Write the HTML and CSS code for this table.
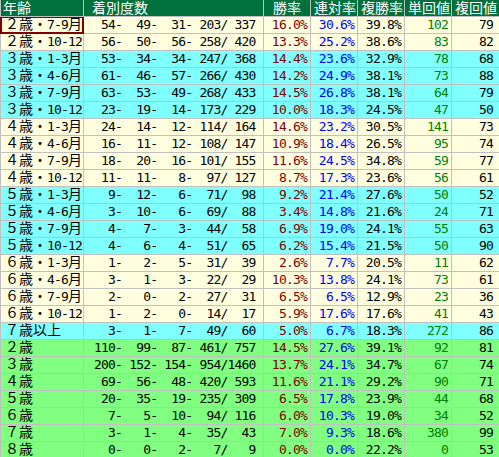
FILE: index.html
```html
<!DOCTYPE html>
<html lang="ja">
<head>
<meta charset="utf-8">
<title>年齢別成績</title>
<link rel="stylesheet" href="styles.css">
</head>
<body>
<table class="stats">
<colgroup>
<col class="c-age"><col class="c-rec"><col class="c-p"><col class="c-p"><col class="c-p"><col class="c-p"><col class="c-last">
</colgroup>
<thead>
<tr><th class="h-age">年齢</th><th class="h-rec">着別度数</th><th>勝率</th><th>連対率</th><th>複勝率</th><th>単回値</th><th>複回値</th></tr>
</thead>
<tbody>
<tr class="cream"><td class="age sel">２歳・<span class="nn">7-9</span>月</td><td class="rec n">  54-  49-  31- 203/ 337</td><td class="n win">16.0%</td><td class="n ren">30.6%</td><td class="n fuku">39.8%</td><td class="n tan">102</td><td class="n fk last">79</td></tr>
<tr class="cream"><td class="age">２歳・<span class="nn">10-12</span></td><td class="rec n">  56-  50-  56- 258/ 420</td><td class="n win">13.3%</td><td class="n ren">25.2%</td><td class="n fuku">38.6%</td><td class="n tan">83</td><td class="n fk last">82</td></tr>
<tr class="cyan"><td class="age">３歳・<span class="nn">1-3</span>月</td><td class="rec n">  53-  34-  34- 247/ 368</td><td class="n win">14.4%</td><td class="n ren">23.6%</td><td class="n fuku">32.9%</td><td class="n tan">78</td><td class="n fk last">68</td></tr>
<tr class="cyan"><td class="age">３歳・<span class="nn">4-6</span>月</td><td class="rec n">  61-  46-  57- 266/ 430</td><td class="n win">14.2%</td><td class="n ren">24.9%</td><td class="n fuku">38.1%</td><td class="n tan">73</td><td class="n fk last">88</td></tr>
<tr class="cyan"><td class="age">３歳・<span class="nn">7-9</span>月</td><td class="rec n">  63-  53-  49- 268/ 433</td><td class="n win">14.5%</td><td class="n ren">26.8%</td><td class="n fuku">38.1%</td><td class="n tan">64</td><td class="n fk last">79</td></tr>
<tr class="cyan"><td class="age">３歳・<span class="nn">10-12</span></td><td class="rec n">  23-  19-  14- 173/ 229</td><td class="n win">10.0%</td><td class="n ren">18.3%</td><td class="n fuku">24.5%</td><td class="n tan">47</td><td class="n fk last">50</td></tr>
<tr class="cream"><td class="age">４歳・<span class="nn">1-3</span>月</td><td class="rec n">  24-  14-  12- 114/ 164</td><td class="n win">14.6%</td><td class="n ren">23.2%</td><td class="n fuku">30.5%</td><td class="n tan">141</td><td class="n fk last">73</td></tr>
<tr class="cream"><td class="age">４歳・<span class="nn">4-6</span>月</td><td class="rec n">  16-  11-  12- 108/ 147</td><td class="n win">10.9%</td><td class="n ren">18.4%</td><td class="n fuku">26.5%</td><td class="n tan">95</td><td class="n fk last">74</td></tr>
<tr class="cream"><td class="age">４歳・<span class="nn">7-9</span>月</td><td class="rec n">  18-  20-  16- 101/ 155</td><td class="n win">11.6%</td><td class="n ren">24.5%</td><td class="n fuku">34.8%</td><td class="n tan">59</td><td class="n fk last">77</td></tr>
<tr class="cream"><td class="age">４歳・<span class="nn">10-12</span></td><td class="rec n">  11-  11-   8-  97/ 127</td><td class="n win">8.7%</td><td class="n ren">17.3%</td><td class="n fuku">23.6%</td><td class="n tan">56</td><td class="n fk last">61</td></tr>
<tr class="cyan"><td class="age">５歳・<span class="nn">1-3</span>月</td><td class="rec n">   9-  12-   6-  71/  98</td><td class="n win">9.2%</td><td class="n ren">21.4%</td><td class="n fuku">27.6%</td><td class="n tan">50</td><td class="n fk last">52</td></tr>
<tr class="cyan"><td class="age">５歳・<span class="nn">4-6</span>月</td><td class="rec n">   3-  10-   6-  69/  88</td><td class="n win">3.4%</td><td class="n ren">14.8%</td><td class="n fuku">21.6%</td><td class="n tan">24</td><td class="n fk last">71</td></tr>
<tr class="cyan"><td class="age">５歳・<span class="nn">7-9</span>月</td><td class="rec n">   4-   7-   3-  44/  58</td><td class="n win">6.9%</td><td class="n ren">19.0%</td><td class="n fuku">24.1%</td><td class="n tan">55</td><td class="n fk last">63</td></tr>
<tr class="cyan"><td class="age">５歳・<span class="nn">10-12</span></td><td class="rec n">   4-   6-   4-  51/  65</td><td class="n win">6.2%</td><td class="n ren">15.4%</td><td class="n fuku">21.5%</td><td class="n tan">50</td><td class="n fk last">90</td></tr>
<tr class="cream"><td class="age">６歳・<span class="nn">1-3</span>月</td><td class="rec n">   1-   2-   5-  31/  39</td><td class="n win">2.6%</td><td class="n ren">7.7%</td><td class="n fuku">20.5%</td><td class="n tan">11</td><td class="n fk last">62</td></tr>
<tr class="cream"><td class="age">６歳・<span class="nn">4-6</span>月</td><td class="rec n">   3-   1-   3-  22/  29</td><td class="n win">10.3%</td><td class="n ren">13.8%</td><td class="n fuku">24.1%</td><td class="n tan">73</td><td class="n fk last">61</td></tr>
<tr class="cream"><td class="age">６歳・<span class="nn">7-9</span>月</td><td class="rec n">   2-   0-   2-  27/  31</td><td class="n win">6.5%</td><td class="n ren">6.5%</td><td class="n fuku">12.9%</td><td class="n tan">23</td><td class="n fk last">36</td></tr>
<tr class="cream"><td class="age">６歳・<span class="nn">10-12</span></td><td class="rec n">   1-   2-   0-  14/  17</td><td class="n win">5.9%</td><td class="n ren">17.6%</td><td class="n fuku">17.6%</td><td class="n tan">41</td><td class="n fk last">43</td></tr>
<tr class="cyan"><td class="age">７歳以上</td><td class="rec n">   3-   1-   7-  49/  60</td><td class="n win">5.0%</td><td class="n ren">6.7%</td><td class="n fuku">18.3%</td><td class="n tan">272</td><td class="n fk last">86</td></tr>
<tr class="green"><td class="age">２歳</td><td class="rec n"> 110-  99-  87- 461/ 757</td><td class="n win">14.5%</td><td class="n ren">27.6%</td><td class="n fuku">39.1%</td><td class="n tan">92</td><td class="n fk last">81</td></tr>
<tr class="green"><td class="age">３歳</td><td class="rec n"> 200- 152- 154- 954/1460</td><td class="n win">13.7%</td><td class="n ren">24.1%</td><td class="n fuku">34.7%</td><td class="n tan">67</td><td class="n fk last">74</td></tr>
<tr class="green"><td class="age">４歳</td><td class="rec n">  69-  56-  48- 420/ 593</td><td class="n win">11.6%</td><td class="n ren">21.1%</td><td class="n fuku">29.2%</td><td class="n tan">90</td><td class="n fk last">71</td></tr>
<tr class="green"><td class="age">５歳</td><td class="rec n">  20-  35-  19- 235/ 309</td><td class="n win">6.5%</td><td class="n ren">17.8%</td><td class="n fuku">23.9%</td><td class="n tan">44</td><td class="n fk last">68</td></tr>
<tr class="green"><td class="age">６歳</td><td class="rec n">   7-   5-  10-  94/ 116</td><td class="n win">6.0%</td><td class="n ren">10.3%</td><td class="n fuku">19.0%</td><td class="n tan">34</td><td class="n fk last">52</td></tr>
<tr class="green"><td class="age">７歳</td><td class="rec n">   3-   1-   4-  35/  43</td><td class="n win">7.0%</td><td class="n ren">9.3%</td><td class="n fuku">18.6%</td><td class="n tan">380</td><td class="n fk last">99</td></tr>
<tr class="green"><td class="age">８歳</td><td class="rec n">   0-   0-   2-   7/   9</td><td class="n win">0.0%</td><td class="n ren">0.0%</td><td class="n fuku">22.2%</td><td class="n tan">0</td><td class="n fk last">53</td></tr>
</tbody>
</table>
</body>
</html>
```
FILE: styles.css
```css
html, body {
  margin: 0;
  padding: 0;
  background: #ffffff;
}

.stats {
  border-collapse: collapse;
  table-layout: fixed;
  width: 499px;
  font-family: "Noto Sans CJK JP", sans-serif;
  font-size: 14px;
  line-height: 16px;
  color: #000000;
}

.c-age { width: 83px; }
.c-rec { width: 180px; }
.c-p { width: 47px; }
.c-last { width: 48px; }

.stats th,
.stats td {
  height: 16px;
  padding: 0 3px 0 3px;
  border: 1px solid #c0c0c0;
  white-space: pre;
  vertical-align: middle;
  line-height: 16px;
}

.stats th {
  background: #00703c;
  color: #ffffff;
  font-weight: normal;
  text-align: center;
  border-top: 0;
  vertical-align: top;
  line-height: 14px;
}

.stats th.h-age { text-align: left; padding-left: 2px; }
.stats th.h-rec { text-align: left; padding-left: 8px; }

.stats td { text-align: right; }
.stats td.age {
  text-align: left;
  padding-left: 4px;
  vertical-align: top;
  line-height: 13px;
}
.stats td.rec { padding-right: 8px; }
.stats td.last { padding-right: 6px; }

.stats td.sel {
  box-shadow: inset 0 0 0 1px #800000;
  border-color: #800000;
}

.stats td.n {
  font-family: "DejaVu Sans Mono", monospace;
  font-size: 13px;
  letter-spacing: -0.8px;
}

.nn {
  font-family: "DejaVu Sans Mono", monospace;
  font-size: 13px;
  letter-spacing: -0.8px;
  line-height: 0;
}

.cream td { background: #ffffe0; }
.cyan td { background: #80ffff; }
.green td { background: #80ff80; }

.win { color: #800000; }
.ren { color: #0000ff; }
.fuku { color: #000000; }
.tan { color: #008000; }
.fk { color: #000000; }
```
